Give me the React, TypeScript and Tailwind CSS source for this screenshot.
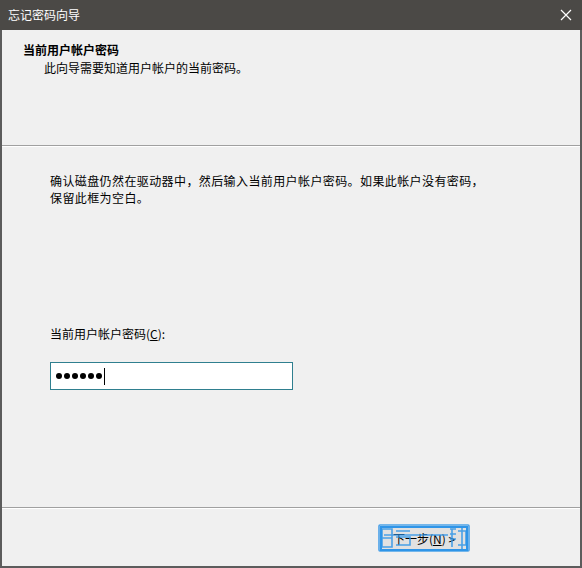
import React from 'react';

const cjk = { fontFamily: '"Noto Sans CJK SC", "Microsoft YaHei", sans-serif' };

function CloseIcon() {
  return (
    <svg width="12" height="12" viewBox="0 0 12 12" className="block">
      <path d="M1 1 L11 11 M11 1 L1 11" stroke="#ffffff" strokeWidth="1.2" />
    </svg>
  );
}

// blue stamp that sits over the default button in the capture
function Stamp() {
  return (
    <svg width="92" height="30" viewBox="0 0 92 30" className="absolute -left-[2px] -top-[3px] pointer-events-none">
      <g stroke="#2f95e8" strokeWidth="1.6" fill="none" opacity="0.85">
        <rect x="1" y="2" width="90" height="26" rx="1" />
        <path d="M4 6 h10 v18 h-10 z M4 15 h10" />
        <path d="M18 8 h14 M18 14 h14 v8 h-14" />
        <path d="M6 12 h64" />
        <path d="M72 6 h6 M72 11 h6 M72 16 h6 M74 6 v18 M80 8 h8 v14 h-8 M84 4 v22" />
      </g>
    </svg>
  );
}

export default function App() {
  return (
    <div
      className="w-[582px] h-[568px] flex flex-col bg-[#f0f0f0] text-[12px] text-black overflow-hidden"
      style={cjk}
    >
      {/* title bar */}
      <div className="h-[30px] shrink-0 bg-[#4b4946] flex items-center justify-between pl-[8px] pr-[10px] text-white">
        <span className="leading-none">忘记密码向导</span>
        <CloseIcon />
      </div>

      <div className="flex-1 flex flex-col border-x-2 border-b-2 border-[#5c5c5c]">
        {/* header */}
        <div className="h-[115px] shrink-0 pt-[11px] pl-[21px]">
          <div className="font-bold leading-[18px]">当前用户帐户密码</div>
          <div className="pl-[21px] leading-[18px]">此向导需要知道用户帐户的当前密码。</div>
        </div>
        <div className="border-t border-[#a0a0a0] border-b border-b-white" />

        {/* body */}
        <div className="flex-1 flex flex-col pl-[48px] pt-[25px]">
          <p className="leading-[17px] tracking-[0.4px]">
            确认磁盘仍然在驱动器中，然后输入当前用户帐户密码。如果此帐户没有密码，
            <br />
            保留此框为空白。
          </p>
          <div className="mt-[119px] leading-[17px]">
            当前用户帐户密码(<span className="underline">C</span>):
          </div>
          <div className="mt-[20px] w-[243px] h-[28px] bg-white border border-[#2f7f8f] flex items-center pl-[5px] gap-[2px]">
            {[0, 1, 2, 3, 4, 5].map((i) => (
              <span key={i} className="w-[6px] h-[6px] rounded-full bg-black" />
            ))}
            <span className="w-px h-[17px] bg-black" />
          </div>
        </div>

        {/* footer */}
        <div className="border-t border-[#a0a0a0] border-b border-b-white" />
        <div className="h-[57px] shrink-0 flex items-start pl-[378px] pt-[17px]">
          <div className="relative">
            <button className="w-[88px] h-[25px] bg-[#e1e1e1] border-2 border-[#2f95e8] flex items-center justify-center leading-none">
              下一步(<span className="underline">N</span>) &gt;
            </button>
            <Stamp />
          </div>
        </div>
      </div>
    </div>
  );
}
